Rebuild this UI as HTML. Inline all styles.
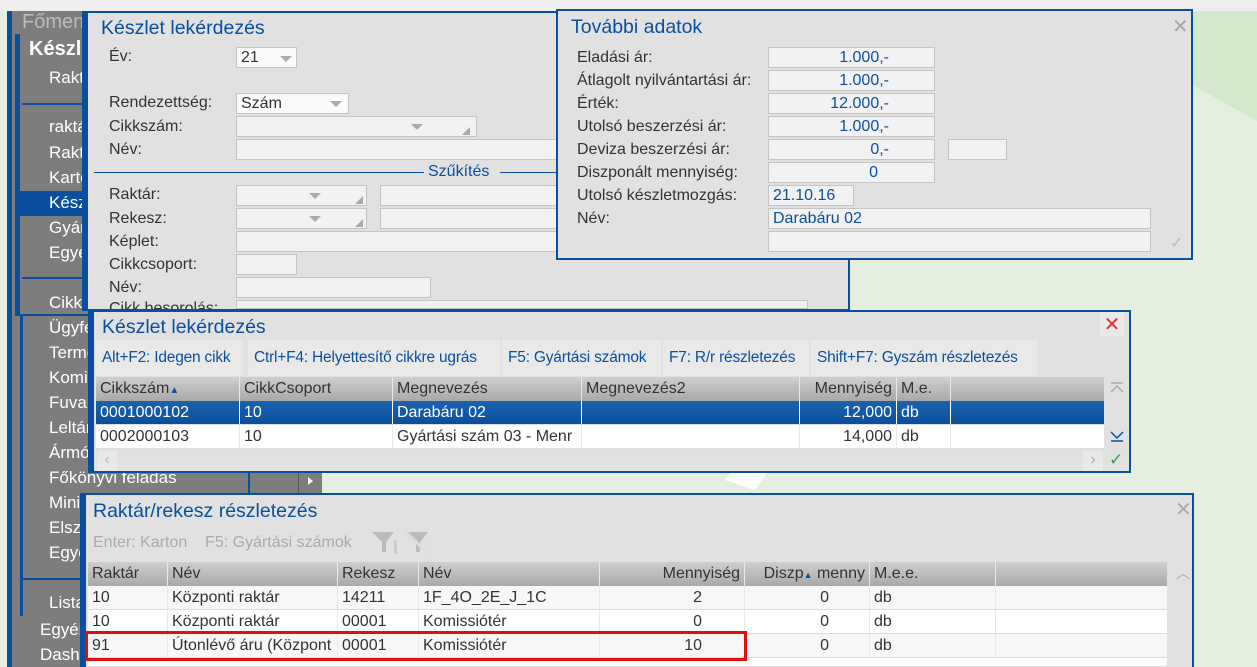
<!DOCTYPE html>
<html><head><meta charset="utf-8"><style>
*{box-sizing:border-box;margin:0;padding:0}
html,body{width:1257px;height:667px;overflow:hidden}
body{position:relative;background:#e4efe0;font-family:"Liberation Sans",Arial,sans-serif;font-size:16px;color:#333}
.a{position:absolute;white-space:nowrap}
.win{position:absolute;background:#e1e1e1;border:2px solid #0a4f9e}
.tt{position:absolute;color:#0a4f9e;font-size:19.5px}
.f{position:absolute;background:#f2f2f2;border:1px solid #c4c4c4;height:21px;color:#0a4f9e;padding:1px 4px;text-align:right}
.w{background:#fafafa}
.mi{position:absolute;left:49px;color:#fff;font-size:17px}
.hd{position:absolute;height:24px;background:linear-gradient(#cfcfcf,#a9a9a9);}
.c{position:absolute;top:0;height:100%;border-right:1px solid #e8e8e8;padding:3px 4px;overflow:hidden;white-space:nowrap}
.r{text-align:right}
.row{position:absolute;height:24px;background:#fff;border-bottom:1px solid #ddd}
.btn{position:absolute;background:#e9e9e9;color:#0a4f9e;padding:9px 0 0 6px;height:36px;white-space:nowrap;font-size:15.5px;letter-spacing:-0.2px}
.dd{position:absolute;width:0;height:0;border-left:6px solid transparent;border-right:6px solid transparent;border-top:6px solid #aaa}
.rz{position:absolute;width:0;height:0;border-left:8px solid transparent;border-bottom:8px solid #aaa}
</style></head><body>
<div class="a" style="left:0;top:0;width:1257px;height:11px;background:#eeeeee"></div>
<svg class="a" style="left:1000px;top:11px" width="257" height="280"><polygon points="60,0 257,0 257,110" fill="#d4e8cd"/></svg>
<svg class="a" style="left:700px;top:440px" width="350" height="60"><polygon points="25,40 60,0 90,0 55,50" fill="#fff"/></svg>
<!-- left menu -->
<div class="a" style="left:7px;top:11px;width:5px;height:656px;background:#0a4f9e"></div>
<div class="a" style="left:12px;top:11px;width:310px;height:656px;background:#7d7d7d"></div>
<div class="a" style="left:22px;top:11px;color:#bbb;font-size:20px">Főmenü</div>
<div class="a" style="left:15px;top:34px;width:5px;height:282px;background:#0a4f9e"></div>
<div class="a" style="left:20px;top:34px;width:300px;height:282px;background:#7d7d7d;border-bottom:2px solid #0a4f9e"></div>
<div class="a" style="left:20px;top:316px;width:3px;height:300px;background:#0a4f9e"></div>
<div class="a" style="left:20px;top:578px;width:230px;height:2px;background:#0a4f9e"></div>
<div class="a" style="left:29px;top:38px;color:#fff;font-size:20px;font-weight:bold">Készlet</div>
<div class="a" style="left:22px;top:103px;width:300px;height:2px;background:#0a4f9e"></div>
<div class="a" style="left:22px;top:277px;width:300px;height:2px;background:#0a4f9e"></div>
<div class="a" style="left:20px;top:191px;width:300px;height:25px;background:#0a4f9e"></div>
<div class="mi" style="top:68px">Raktár</div>
<div class="mi" style="top:117px">raktár</div>
<div class="mi" style="top:143px">Raktár</div>
<div class="mi" style="top:168px">Karton</div>
<div class="mi" style="top:193px">Készlet</div>
<div class="mi" style="top:218px">Gyártás</div>
<div class="mi" style="top:243px">Egyéb</div>
<div class="mi" style="top:293px">Cikktörzs</div>
<div class="mi" style="top:318px">Ügyfelek</div>
<div class="mi" style="top:343px">Termék</div>
<div class="mi" style="top:368px">Komissió</div>
<div class="mi" style="top:393px">Fuvar</div>
<div class="mi" style="top:418px">Leltár</div>
<div class="mi" style="top:443px">Ármód</div>
<div class="mi" style="top:468px">Főkönyvi feladás</div>
<div class="a" style="left:248px;top:472px;width:2px;height:22px;background:#0a4f9e"></div>
<div class="a" style="left:298px;top:472px;width:24px;height:22px;background:#7d7d7d;border-left:1px solid #555"></div>
<div class="a" style="left:308px;top:477px;border-top:4px solid transparent;border-bottom:4px solid transparent;border-left:5px solid #fff"></div>
<div class="mi" style="top:493px">Mini</div>
<div class="mi" style="top:518px">Elsz</div>
<div class="mi" style="top:543px">Egyéb</div>
<div class="mi" style="top:593px">Lista</div>
<div class="mi" style="top:620px;left:40px">Egyéb</div>
<div class="mi" style="top:645px;left:40px">Dash</div>

<!-- window 1 -->
<div class="win" style="left:82px;top:11px;width:768px;height:300px;border-left-width:6px">
<div class="tt" style="left:13px;top:4px">Készlet lekérdezés</div>
</div>
<div class="a" style="left:109px;top:48px">Év:</div>
<div class="f w" style="left:236px;top:47px;width:61px;text-align:left;color:#333">21</div><div class="dd" style="left:280px;top:56px"></div>
<div class="a" style="left:109px;top:94px">Rendezettség:</div>
<div class="f w" style="left:236px;top:93px;width:113px;text-align:left;color:#333">Szám</div><div class="dd" style="left:330px;top:101px"></div>
<div class="a" style="left:109px;top:118px">Cikkszám:</div>
<div class="f" style="left:236px;top:116px;width:241px"></div><div class="dd" style="left:411px;top:124px"></div><div class="rz" style="left:462px;top:127px"></div>
<div class="a" style="left:109px;top:141px">Név:</div>
<div class="f" style="left:236px;top:139px;width:330px"></div>
<div class="a" style="left:94px;top:172px;width:330px;height:1px;background:#0a4f9e"></div>
<div class="a" style="left:428px;top:163px;color:#0a4f9e">Szűkítés</div>
<div class="a" style="left:500px;top:172px;width:56px;height:1px;background:#0a4f9e"></div>
<div class="a" style="left:109px;top:186px">Raktár:</div>
<div class="f" style="left:236px;top:185px;width:131px"></div><div class="dd" style="left:309px;top:193px"></div><div class="rz" style="left:355px;top:196px"></div>
<div class="f" style="left:380px;top:185px;width:180px"></div>
<div class="a" style="left:109px;top:210px">Rekesz:</div>
<div class="f" style="left:236px;top:208px;width:131px"></div><div class="dd" style="left:309px;top:216px"></div><div class="rz" style="left:355px;top:219px"></div>
<div class="f" style="left:380px;top:208px;width:180px"></div>
<div class="a" style="left:109px;top:233px">Képlet:</div>
<div class="f" style="left:236px;top:231px;width:330px"></div>
<div class="a" style="left:109px;top:256px">Cikkcsoport:</div>
<div class="f" style="left:236px;top:254px;width:61px"></div>
<div class="a" style="left:109px;top:279px">Név:</div>
<div class="f" style="left:236px;top:277px;width:195px"></div>
<div class="a" style="left:109px;top:300px;height:9px;overflow:hidden">Cikk besorolás:</div>
<div class="f" style="left:236px;top:300px;width:572px;height:9px"></div>

<!-- window 2 -->
<div class="win" style="left:556px;top:9px;width:637px;height:251px">
<div class="tt" style="left:13px;top:5px">További adatok</div>
<div class="a" style="left:614px;top:3px;color:#aaa;font-size:20px">✕</div>
<div class="a" style="left:612px;top:222px;color:#bbb;font-size:16px">✓</div>
</div>
<div class="a" style="left:577px;top:49px">Eladási ár:</div><div class="f" style="left:768px;top:47px;width:167px;padding-right:45px">1.000,-</div>
<div class="a" style="left:577px;top:72px">Átlagolt nyilvántartási ár:</div><div class="f" style="left:768px;top:70px;width:167px;padding-right:45px">1.000,-</div>
<div class="a" style="left:577px;top:95px">Érték:</div><div class="f" style="left:768px;top:93px;width:167px;padding-right:45px">12.000,-</div>
<div class="a" style="left:577px;top:118px">Utolsó beszerzési ár:</div><div class="f" style="left:768px;top:116px;width:167px;padding-right:45px">1.000,-</div>
<div class="a" style="left:577px;top:141px">Deviza beszerzési ár:</div><div class="f" style="left:768px;top:139px;width:167px;padding-right:45px">0,-</div><div class="f" style="left:948px;top:139px;width:59px"></div>
<div class="a" style="left:577px;top:164px">Diszponált mennyiség:</div><div class="f" style="left:768px;top:162px;width:167px;padding-right:56px">0</div>
<div class="a" style="left:577px;top:187px">Utolsó készletmozgás:</div><div class="f" style="left:768px;top:185px;width:86px;text-align:left">21.10.16</div>
<div class="a" style="left:577px;top:210px">Név:</div><div class="f" style="left:768px;top:208px;width:383px;text-align:left">Darabáru 02</div>
<div class="f" style="left:768px;top:231px;width:383px"></div>

<!-- window 3 -->
<div class="win" style="left:88px;top:310px;width:1043px;height:163px;border-left-width:6px">
<div class="tt" style="left:8px;top:4px">Készlet lekérdezés</div>
<div class="a" style="left:1006px;top:0px;width:24px;height:24px;background:#e9e9e9;color:#d33;font-size:20px;text-align:center">✕</div>
</div>
<div class="btn" style="left:96px;top:340px;width:146px">Alt+F2: Idegen cikk</div>
<div class="btn" style="left:248px;top:340px;width:252px">Ctrl+F4: Helyettesítő cikkre ugrás</div>
<div class="btn" style="left:502px;top:340px;width:159px">F5: Gyártási számok</div>
<div class="btn" style="left:663px;top:340px;width:146px">F7: R/r részletezés</div>
<div class="btn" style="left:811px;top:340px;width:226px">Shift+F7: Gyszám részletezés</div>
<div class="hd" style="left:96px;top:377px;width:1008px"><div class="c" style="left:0;width:144px">Cikkszám<span style="color:#0a4f9e;font-size:10px">▲</span></div><div class="c" style="left:144px;width:153px">CikkCsoport</div><div class="c" style="left:297px;width:189px">Megnevezés</div><div class="c" style="left:486px;width:218px">Megnevezés2</div><div class="c r" style="left:704px;width:97px">Mennyiség</div><div class="c" style="left:801px;width:54px">M.e.</div></div>
<div class="row" style="left:96px;top:401px;width:1008px;background:linear-gradient(#1c63ad,#0a4f9e);color:#fff"><div class="c" style="left:0;width:144px;border-color:#fff">0001000102</div><div class="c" style="left:144px;width:153px;border-color:#fff">10</div><div class="c" style="left:297px;width:189px;border-color:#fff">Darabáru 02</div><div class="c" style="left:486px;width:218px;border-color:#fff"></div><div class="c r" style="left:704px;width:97px;border-color:#fff">12,000</div><div class="c" style="left:801px;width:54px;border-color:#fff">db</div></div>
<div class="row" style="left:96px;top:425px;width:1008px"><div class="c" style="left:0;width:144px">0002000103</div><div class="c" style="left:144px;width:153px">10</div><div class="c" style="left:297px;width:189px">Gyártási szám 03 - Menr</div><div class="c" style="left:486px;width:218px"></div><div class="c r" style="left:704px;width:97px">14,000</div><div class="c" style="left:801px;width:54px">db</div></div>
<div class="a" style="left:97px;top:451px;width:20px;height:20px;background:#e9e9e9;color:#bbb;text-align:center">‹</div>
<div class="a" style="left:1083px;top:451px;width:20px;height:20px;background:#e9e9e9;color:#aaa;text-align:center">›</div>
<svg class="a" style="left:1109px;top:381px" width="16" height="14"><line x1="2" y1="2" x2="14" y2="2" stroke="#aaa" stroke-width="1.5"/><polyline points="2,11 8,5 14,11" fill="none" stroke="#aaa" stroke-width="1.5"/></svg>
<svg class="a" style="left:1109px;top:429px" width="16" height="14"><line x1="2" y1="12" x2="14" y2="12" stroke="#0a4f9e" stroke-width="1.5"/><polyline points="2,3 8,9 14,3" fill="none" stroke="#0a4f9e" stroke-width="1.5"/></svg>
<div class="a" style="left:1109px;top:450px;color:#3a9a5a;font-size:17px">✓</div>

<!-- window 4 -->
<div class="win" style="left:80px;top:493px;width:1114px;height:176px;border-left-width:6px">
<div class="tt" style="left:7px;top:5px">Raktár/rekesz részletezés</div>
<div class="a" style="left:1089px;top:2px;color:#aaa;font-size:20px">✕</div>
<div class="a" style="left:1090px;top:68px;color:#aaa;font-size:14px">︿</div>
</div>
<div class="a" style="left:93px;top:534px;color:#aaa">Enter: Karton &nbsp;&nbsp; F5: Gyártási számok</div>
<svg class="a" style="left:372px;top:530px" width="60" height="26"><polygon points="0,2 22,2 14,12 14,22 10,22 10,12" fill="#bbb"/><rect x="22" y="10" width="3" height="14" fill="#ccc"/><polygon points="34,2 56,2 48,12 48,22 44,22 44,12" fill="#bbb"/><line x1="34" y1="2" x2="56" y2="24" stroke="#ddd" stroke-width="3"/></svg>
<div class="hd" style="left:88px;top:562px;width:1079px"><div class="c" style="left:0;width:80px">Raktár</div><div class="c" style="left:80px;width:170px">Név</div><div class="c" style="left:250px;width:81px">Rekesz</div><div class="c" style="left:331px;width:181px">Név</div><div class="c r" style="left:512px;width:145px">Mennyiség</div><div class="c r" style="left:657px;width:125px">Diszp<span style="color:#0a4f9e;font-size:9px">▲</span> menny</div><div class="c" style="left:782px;width:126px">M.e.e.</div></div>
<div class="row" style="left:88px;top:586px;width:1079px;background:#f7f7f7"><div class="c" style="left:0;width:80px">10</div><div class="c" style="left:80px;width:170px">Központi raktár</div><div class="c" style="left:250px;width:81px">14211</div><div class="c" style="left:331px;width:181px">1F_4O_2E_J_1C</div><div class="c r" style="left:512px;width:145px;padding-right:42px">2</div><div class="c r" style="left:657px;width:125px;padding-right:40px">0</div><div class="c" style="left:782px;width:126px">db</div></div>
<div class="row" style="left:88px;top:610px;width:1079px"><div class="c" style="left:0;width:80px">10</div><div class="c" style="left:80px;width:170px">Központi raktár</div><div class="c" style="left:250px;width:81px">00001</div><div class="c" style="left:331px;width:181px">Komissiótér</div><div class="c r" style="left:512px;width:145px;padding-right:42px">0</div><div class="c r" style="left:657px;width:125px;padding-right:40px">0</div><div class="c" style="left:782px;width:126px">db</div></div>
<div class="row" style="left:88px;top:634px;width:1079px;background:#f7f7f7"><div class="c" style="left:0;width:80px">91</div><div class="c" style="left:80px;width:170px">Útonlévő áru (Központ</div><div class="c" style="left:250px;width:81px">00001</div><div class="c" style="left:331px;width:181px">Komissiótér</div><div class="c r" style="left:512px;width:145px;padding-right:42px">10</div><div class="c r" style="left:657px;width:125px;padding-right:40px">0</div><div class="c" style="left:782px;width:126px">db</div></div>
<div class="row" style="left:88px;top:658px;width:1079px;height:9px"></div>
<div class="a" style="left:85px;top:631px;width:662px;height:30px;border:3px solid #e01010"></div>
</body></html>
